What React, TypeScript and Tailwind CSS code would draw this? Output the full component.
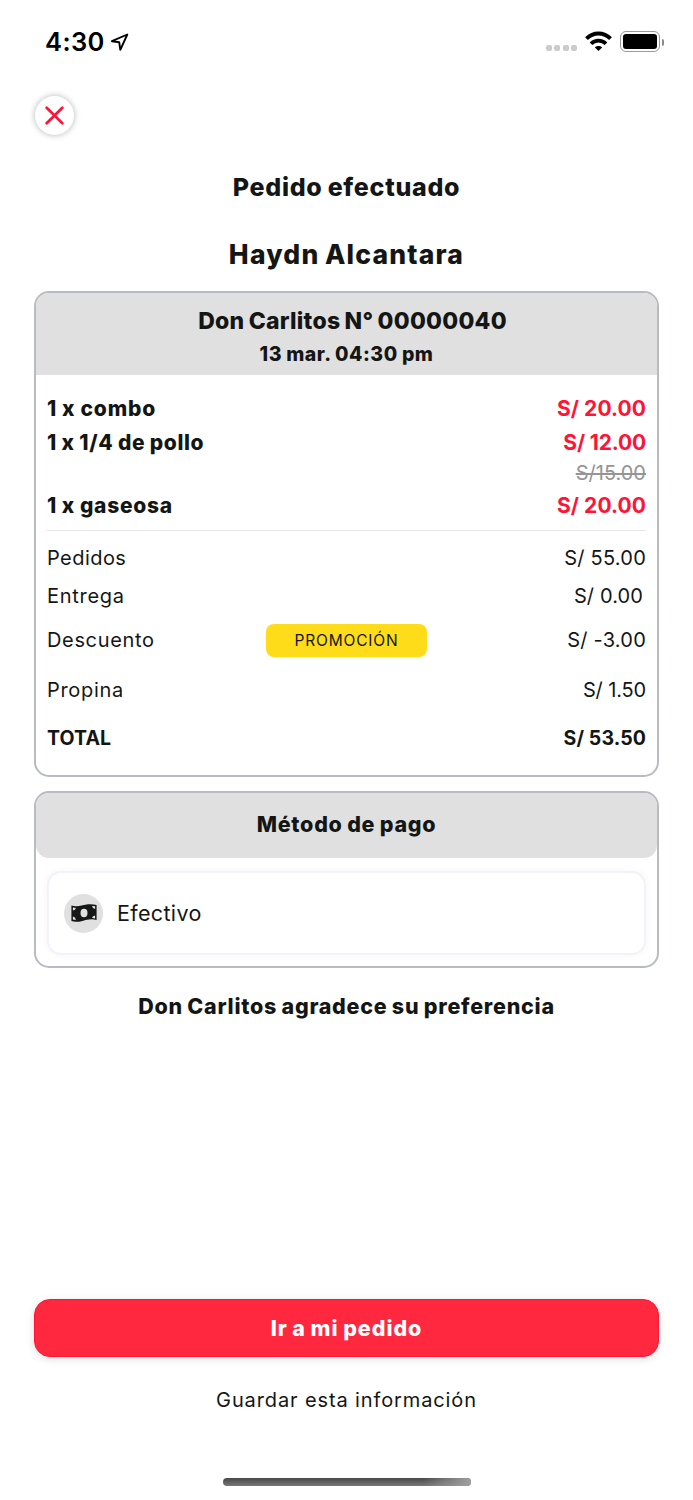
const items = [
  {
    name: "1 x combo",
    nameClass: "tracking-[0.87px]",
    price: "S/ 20.00",
    priceClass: "tracking-[0.08px]",
  },
  {
    name: "1 x 1/4 de pollo",
    nameClass: "tracking-[0.6px]",
    price: "S/ 12.00",
    priceClass: "tracking-[-0.15px]",
    oldPrice: "S/15.00",
  },
  {
    name: "1 x gaseosa",
    nameClass: "tracking-[0.74px]",
    price: "S/ 20.00",
    priceClass: "tracking-[0.08px]",
  },
];

const StatusBar = () => {
  return (
    <div className="flex h-[84px] items-center justify-between pl-[45px] pr-[29px] text-black">
      <div className="flex items-center gap-[5px]">
        <span className="text-[25.5px] font-semibold tracking-[0.4px]">
          4:30
        </span>
        <svg width="19" height="19" viewBox="0 0 19 19" fill="none">
          <path
            d="M17.3 1.5 1.9 8.2 9.2 9.2 10.3 16.9Z"
            stroke="currentColor"
            strokeWidth="1.9"
            strokeLinejoin="round"
          />
        </svg>
      </div>
      <div className="flex items-center">
        <div className="mt-[12px] flex gap-[2.4px]">
          <span className="h-1.5 w-1.5 rounded-[2px] bg-[#cbcbcb]" />
          <span className="h-1.5 w-1.5 rounded-[2px] bg-[#cbcbcb]" />
          <span className="h-1.5 w-1.5 rounded-[2px] bg-[#cbcbcb]" />
          <span className="h-1.5 w-1.5 rounded-[2px] bg-[#cbcbcb]" />
        </div>
        <svg
          className="-mt-0.5 mr-[8px] ml-[8px]"
          width="27"
          height="20"
          viewBox="0 0 27 20"
          fill="none"
        >
          <path
            d="M1.5 7.6C8.2 .8 18.8 .8 25.5 7.6"
            stroke="currentColor"
            strokeWidth="4"
          />
          <path
            d="M6 12.7C10.2 8.5 16.8 8.5 21 12.7"
            stroke="currentColor"
            strokeWidth="3.7"
          />
          <path
            d="M13.5 20 9.9 16.5C12 14.6 15 14.6 17.1 16.5Z"
            fill="currentColor"
          />
        </svg>
        <div className="-mt-px flex h-[21px] w-10 rounded-[6px] border-[1.5px] border-[#999] p-[2px]">
          <div className="flex-1 rounded-[3px] bg-black" />
        </div>
        <div className="ml-[1.5px] h-[7px] w-[2.5px] rounded-r-full bg-[#888]" />
      </div>
    </div>
  );
};

const CashIcon = () => {
  return (
    <svg width="26" height="18" viewBox="0 0 26 18">
      <path
        d="M0.4 1.6C6.5 3.4 11 1.2 15.5 .5 19 0 22.5 .2 25.6 1V16.1C20.5 14.3 16 15.8 11.5 16.9 7.5 17.9 3.5 18.2 .4 17.1Z"
        fill="#161818"
      />
      <ellipse cx="13" cy="9" rx="3.5" ry="4.2" fill="#e0e0e0" />
      <path
        d="M1.9 3.6 4.9 4.1Q4.6 6.2 1.9 6.5ZM1.9 12.6Q4.5 13 4.9 15.9L1.9 15.5ZM24.1 2.2V5.1Q21.5 4.7 21.1 2ZM24.1 11.6V14.4L21.1 13.9Q21.4 11.8 24.1 11.6Z"
        fill="#e0e0e0"
      />
    </svg>
  );
};

export default function App() {
  return (
    <main className="flex h-[1500px] w-[693px] flex-col overflow-hidden bg-white font-['Inter',sans-serif] text-[#141616]">
      <StatusBar />

      <div className="px-[34px]">
        <button className="mt-3 ml-px flex h-[39px] w-[39px] items-center justify-center rounded-full bg-white text-[#ff1438] shadow-[0_0_6px_rgba(0,0,0,0.3)]">
          <svg width="19" height="19" viewBox="0 0 18 18" fill="none">
            <path
              d="M1.6 1.6 16.4 16.4M16.4 1.6 1.6 16.4"
              stroke="currentColor"
              strokeWidth="2.6"
              strokeLinecap="round"
            />
          </svg>
        </button>

        <h1 className="mt-[34px] h-9 text-center text-[25px] leading-9 font-extrabold tracking-[0.7px] [word-spacing:-1px]">
          Pedido efectuado
        </h1>
        <h2 className="mt-[31px] h-9 text-center text-[26.5px] leading-9 font-extrabold tracking-[1.2px] [word-spacing:-1.5px]">
          Haydn Alcantara
        </h2>

        <section className="mt-[19px] h-[486px] overflow-hidden rounded-[15px] border-2 border-[#b9bbc2]">
          <div className="flex h-[82px] flex-col items-center bg-[#e0e0e0] pt-[12px] font-extrabold">
            <p className="pl-3 text-[23px] leading-8 tracking-[0.25px] [word-spacing:-1px]">
              Don Carlitos N° 00000040
            </p>
            <p className="mt-[2px] text-[19.5px] leading-[30px] tracking-[0.5px] [word-spacing:-0.5px]">
              13 mar. 04:30 pm
            </p>
          </div>

          <div className="px-[11px]">
            <div className="border-b-[1.5px] border-[#e6e6e6] pt-[17px] pb-[7px] text-[21px] font-bold">
              {items.map((item, i) => (
                <div key={i}>
                  <div className="flex h-[34px] items-center justify-between">
                    <span
                      className={
                        "font-extrabold [word-spacing:-0.5px] " + item.nameClass
                      }
                    >
                      {item.name}
                    </span>
                    <span className={"text-[#ff1438] " + item.priceClass}>
                      {item.price}
                    </span>
                  </div>
                  {item.oldPrice && (
                    <div className="flex h-[29px] items-center justify-end pb-1 text-xl font-normal text-[#959595] line-through">
                      {item.oldPrice}
                    </div>
                  )}
                </div>
              ))}
            </div>

            <div className="pt-2 text-xl">
              <div className="flex h-[37px] items-center justify-between">
                <span className="tracking-[0.45px]">Pedidos</span>
                <span className="tracking-[0.24px]">S/ 55.00</span>
              </div>
              <div className="flex h-[40px] items-center justify-between pr-[3px]">
                <span className="tracking-[0.7px]">Entrega</span>
                <span className="tracking-[0.12px]">S/ 0.00</span>
              </div>
              <div className="grid h-12 grid-cols-[1fr_161px_1fr] items-center">
                <span className="tracking-[0.65px]">Descuento</span>
                <span className="flex h-[33px] items-center justify-center rounded-[8px] bg-[#ffdc19] pt-px text-[15.5px] tracking-[0.82px]">
                  PROMOCIÓN
                </span>
                <span className="text-right tracking-[0.23px]">S/ -3.00</span>
              </div>
              <div className="flex h-[52px] items-center justify-between">
                <span className="tracking-[0.7px]">Propina</span>
                <span className="tracking-[-0.14px]">S/ 1.50</span>
              </div>
              <div className="flex h-[45px] items-center justify-between text-[19.5px] font-bold">
                <span className="tracking-[0.1px]">TOTAL</span>
                <span className="tracking-[0.1px]">S/ 53.50</span>
              </div>
            </div>
          </div>
        </section>

        <section className="mt-[14px] h-[177px] overflow-hidden rounded-[15px] border-2 border-[#b9bbc2]">
          <h3 className="flex h-[65px] items-center justify-center rounded-b-[13px] bg-[#e0e0e0] pb-0.5 text-[21.5px] font-extrabold tracking-[0.75px] [word-spacing:-1px]">
            Método de pago
          </h3>
          <div className="mx-[11px] mt-[13px] flex h-[84px] items-center rounded-[14px] border-2 border-[#f2f2f9] bg-white pl-[15px] shadow-[0_0_10px_rgba(0,0,0,0.04)]">
            <div className="flex h-[39px] w-[39px] items-center justify-center rounded-full bg-[#e0e0e0]">
              <CashIcon />
            </div>
            <span className="ml-[14px] text-[21.5px] tracking-[0.35px]">
              Efectivo
            </span>
          </div>
        </section>

        <p className="mt-5 text-center text-[21.5px] leading-9 font-extrabold tracking-[0.74px] [word-spacing:-1px]">
          Don Carlitos agradece su preferencia
        </p>
      </div>

      <div className="mt-auto px-[34px]">
        <button className="h-[58px] w-full rounded-[16px] border border-[#ff1535] bg-[#ff283f] text-[21.5px] font-extrabold tracking-[0.95px] text-white shadow-[0_2px_9px_rgba(0,0,0,0.13)] [word-spacing:-1px]">
          Ir a mi pedido
        </button>
        <p className="mt-[25px] text-center text-xl leading-9 tracking-[0.88px]">
          Guardar esta información
        </p>
        <div className="mx-auto mt-[60px] mb-[14px] h-2 w-[248px] rounded-full bg-linear-to-b from-[#484848] to-[#787878]">
          <div className="ml-auto h-2 w-12 rounded-r-full bg-linear-to-r from-transparent to-[#a0a0a0]" />
        </div>
      </div>
    </main>
  );
}
